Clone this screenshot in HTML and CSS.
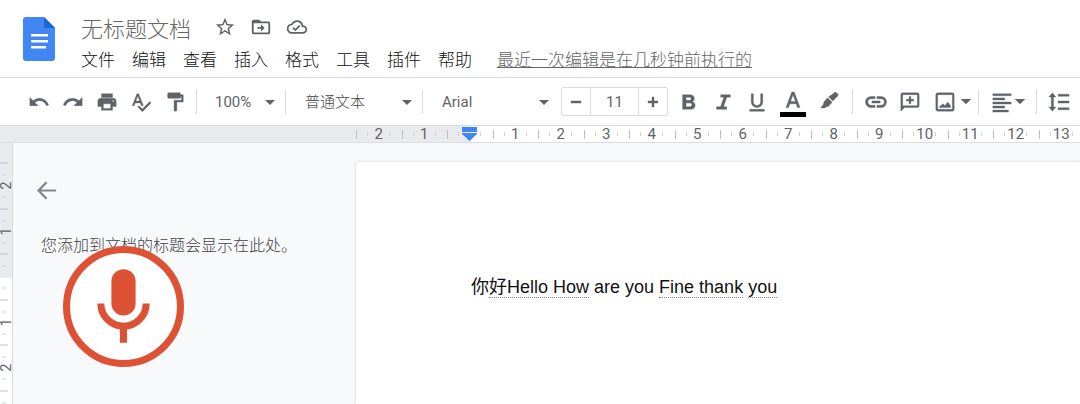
FILE: index.html
```html
<!DOCTYPE html>
<html lang="zh-CN">
<head>
  <meta charset="UTF-8">
  <meta name="viewport" content="width=device-width, initial-scale=1.0">
  <title>无标题文档</title>
  <link rel="stylesheet" href="styles.css">
</head>
<body>
  <header class="header">
    <svg class="logo" viewBox="0 0 32 44" aria-hidden="true">
      <path fill="#4285f4" d="M3 0h18l11 11v30a3 3 0 0 1-3 3H3a3 3 0 0 1-3-3V3a3 3 0 0 1 3-3z"/>
      <path fill="#1967d2" d="M21 0l11 11H21z"/>
      <path fill="#fff" d="M8 17h17v2.5H8zM8 23h17v2.5H8zM8 29h15v2.5H8z"/>
    </svg>
    <div class="header-main">
      <div class="title-row">
        <input class="doc-title" type="text" value="无标题文档" aria-label="文档标题">
        <button class="title-button" type="button" aria-label="加星标">
          <svg viewBox="0 0 24 24"><path d="M22 9.24l-7.19-.62L12 2 9.19 8.63 2 9.24l5.46 4.73L5.82 21 12 17.27 18.18 21l-1.63-7.03L22 9.24zM12 15.4l-3.76 2.27 1-4.28-3.32-2.88 4.38-.38L12 6.1l1.71 4.04 4.38.38-3.32 2.88 1 4.28L12 15.4z"/></svg>
        </button>
        <button class="title-button" type="button" aria-label="移动">
          <svg viewBox="0 0 24 24"><path d="M20 6h-8l-2-2H4c-1.1 0-2 .9-2 2v12c0 1.1.9 2 2 2h16c1.1 0 2-.9 2-2V8c0-1.1-.9-2-2-2zm0 12H4V8h16v10zm-8-1l4-4-4-4v3H8v2h4z"/></svg>
        </button>
        <button class="title-button" type="button" aria-label="查看文档状态">
          <svg viewBox="-1 -1 26 26"><path d="M19.35 10.04A7.49 7.49 0 0 0 12 4C9.11 4 6.6 5.64 5.35 8.04A5.994 5.994 0 0 0 0 14c0 3.31 2.69 6 6 6h13c2.76 0 5-2.24 5-5 0-2.64-2.05-4.78-4.65-4.96zM19 18H6c-2.21 0-4-1.79-4-4 0-2.05 1.53-3.76 3.56-3.97l1.07-.11.5-.95A5.469 5.469 0 0 1 12 6c2.62 0 4.88 1.86 5.39 4.43l.3 1.5 1.53.11A2.98 2.98 0 0 1 22 15c0 1.65-1.35 3-3 3zm-9-3.82l-2.09-2.09L6.5 13.5 10 17l6.01-6.01-1.41-1.41z"/></svg>
        </button>
      </div>
      <nav class="menu-row">
        <button class="menu" type="button">文件</button>
        <button class="menu" type="button">编辑</button>
        <button class="menu" type="button">查看</button>
        <button class="menu" type="button">插入</button>
        <button class="menu" type="button">格式</button>
        <button class="menu" type="button">工具</button>
        <button class="menu" type="button">插件</button>
        <button class="menu" type="button">帮助</button>
        <a class="last-edit" href="#">最近一次编辑是在几秒钟前执行的</a>
      </nav>
    </div>
  </header>

  <div class="toolbar" role="toolbar" aria-label="工具栏">
    <button class="tool" type="button" aria-label="撤消">
      <svg viewBox="0 0 24 24"><path d="M12.5 8c-2.65 0-5.05.99-6.9 2.6L2 7v9h9l-3.62-3.62c1.39-1.16 3.16-1.88 5.12-1.88 3.54 0 6.55 2.31 7.6 5.5l2.37-.78C21.08 11.03 17.15 8 12.5 8z"/></svg>
    </button>
    <button class="tool" type="button" aria-label="重做">
      <svg viewBox="0 0 24 24"><path d="M18.4 10.6C16.55 8.99 14.15 8 11.5 8c-4.65 0-8.58 3.03-9.96 7.22L3.9 16c1.05-3.19 4.05-5.5 7.6-5.5 1.95 0 3.73.72 5.12 1.88L13 16h9V7l-3.6 3.6z"/></svg>
    </button>
    <button class="tool" type="button" aria-label="打印">
      <svg viewBox="0 0 24 24"><path d="M19 8H5c-1.66 0-3 1.34-3 3v6h4v4h12v-4h4v-6c0-1.66-1.34-3-3-3zm-3 11H8v-5h8v5zm3-7c-.55 0-1-.45-1-1s.45-1 1-1 1 .45 1 1-.45 1-1 1zm-1-9H6v4h12V3z"/></svg>
    </button>
    <button class="tool" type="button" aria-label="拼写和语法检查">
      <svg viewBox="0 0 24 24"><path d="M12.45 16h2.09L9.43 3H7.57L2.46 16h2.09l1.12-3h5.64l1.14 3zm-6.02-5L8.5 5.48 10.57 11H6.43zm15.16.59l-8.09 8.09L9.83 16l-1.41 1.41 5.09 5.09L23 13l-1.41-1.41z"/></svg>
    </button>
    <button class="tool" type="button" aria-label="格式刷">
      <svg viewBox="0 0 24 24"><path d="M18 4V3c0-.55-.45-1-1-1H5c-.55 0-1 .45-1 1v4c0 .55.45 1 1 1h12c.55 0 1-.45 1-1V6h1v4h-8v11c0 .55.45 1 1 1h1c.55 0 1-.45 1-1v-9h7V4h-3z"/></svg>
    </button>
    <span class="separator"></span>
    <div class="picker picker-zoom">
      <select aria-label="缩放"><option>100%</option></select>
      <svg class="arrow" viewBox="0 0 10 5"><path d="M0 0h10L5 5z"/></svg>
    </div>
    <span class="separator flush"></span>
    <div class="picker">
      <select class="style-select" aria-label="样式"><option>普通文本</option></select>
      <svg class="arrow" viewBox="0 0 10 5"><path d="M0 0h10L5 5z"/></svg>
    </div>
    <span class="separator flush"></span>
    <div class="picker">
      <select aria-label="字体"><option>Arial</option></select>
      <svg class="arrow" viewBox="0 0 10 5"><path d="M0 0h10L5 5z"/></svg>
    </div>
    <div class="stepper">
      <button type="button" aria-label="减小字号"><svg viewBox="0 0 12 12"><path d="M1 5h10v2H1z"/></svg></button>
      <input type="text" value="11" aria-label="字号">
      <button type="button" aria-label="增大字号"><svg viewBox="0 0 12 12"><path d="M1 5h4V1h2v4h4v2H7v4H5V7H1z"/></svg></button>
    </div>
    <button class="tool" type="button" aria-label="粗体">
      <svg viewBox="0 0 24 24"><path d="M16 11.6c1.1-.8 1.8-2 1.8-3.3C17.8 5.3 15.7 4 13 4H5v16h8.8c2.8 0 4.900-1.900 4.900-4.500 0-1.800-1.100-3.200-2.700-3.900zM8.800 6.900h3.800c1 0 1.700.7 1.700 1.600s-.7 1.700-1.700 1.700H8.800zm4.300 10.200H8.800v-4h4.300c1.100 0 2 .9 2 2s-.9 2-2 2z"/></svg>
    </button>
    <button class="tool" type="button" aria-label="斜体">
      <svg viewBox="0 0 24 24"><path d="M9.500 4v2.800h3.500L9.300 17.200H5V20h11v-2.800h-3.500l3.700-10.400H20V4z"/></svg>
    </button>
    <button class="tool" type="button" aria-label="下划线">
      <svg viewBox="0 0 24 24"><path d="M12 18c3.600 0 6.300-2.700 6.300-6.200V3h-2.300v8.800c0 2.300-1.700 4-4 4s-4-1.700-4-4V3H5.700v8.800C5.700 15.300 8.400 18 12 18zM4 20v2.200h16V20z"/></svg>
    </button>
    <button class="tool text-color" type="button" aria-label="文字颜色">
      <svg viewBox="0 0 28 26"><path d="M12.800 1L7 16.500h2.500l1.300-3.700h6.400l1.300 3.700H21L15.200 1zm-1.200 9.500L14 3.700l2.400 6.800z"/><path fill="#000" stroke="none" d="M1 21h26v5H1z"/></svg>
    </button>
    <button class="tool" type="button" aria-label="突出显示颜色">
      <svg viewBox="0 0 24 24"><path d="M15.500 3.800l2.300-2.100c.6-.6 1.400-.6 2 0l1.700 1.700c.6.600.6 1.400 0 2l-5.400 5.500-4.600-4.600zM10.400 7.400l5 5-3.900 4.100c-.6.600-1.500.7-2.300.4L7.600 18.500H3l3.200-4.400c-.3-.8-.1-1.700.5-2.300z"/></svg>
    </button>
    <span class="separator wide"></span>
    <button class="tool" type="button" aria-label="插入链接">
      <svg viewBox="0 0 24 24"><path d="M3.100 12c0-2 1.500-3.500 3.400-3.500H11V6H6.500a6 6 0 0 0 0 12H11v-2.500H6.500C4.600 15.500 3.100 14 3.100 12zM7.500 13.200h9v-2.400h-9zM17.500 6H13v2.500h4.500a3.500 3.500 0 0 1 0 7H13V18h4.500a6 6 0 0 0 0-12z"/></svg>
    </button>
    <button class="tool" type="button" aria-label="添加评论">
      <svg viewBox="0 0 24 24"><path d="M20 2H4c-1.100 0-2 .9-2 2v18l4-4h14c1.100 0 2-.9 2-2V4c0-1.100-.9-2-2-2zm0 14H4V4h16zM11 14h2v-3h3V9h-3V6h-2v3H8v2h3z"/></svg>
    </button>
    <button class="tool image-menu" type="button" aria-label="插入图片">
      <svg viewBox="0 0 24 24"><path d="M20 2H4c-1.100 0-2 .9-2 2v16c0 1.100.9 2 2 2h16c1.100 0 2-.9 2-2V4c0-1.100-.9-2-2-2zm0 18H4V4h16zM6 18h12v-2l-3-4-3 4-2-2-4 3z"/></svg>
      <svg class="arrow" viewBox="0 0 10 5"><path d="M0 0h10L5 5z"/></svg>
    </button>
    <span class="separator flush"></span>
    <button class="tool align-menu" type="button" aria-label="对齐">
      <svg viewBox="0 0 24 24"><path d="M2 3h20v2.200H2zM2 7.500h13v2.200H2zM2 12h20v2.200H2zM2 16.400h13v2.200H2zM2 20.800h17V23H2z"/></svg>
      <svg class="arrow" viewBox="0 0 10 5"><path d="M0 0h10L5 5z"/></svg>
    </button>
    <span class="separator flush"></span>
    <button class="tool spacing" type="button" aria-label="行间距">
      <svg viewBox="0 0 24 24"><path d="M4.800 2L1 6.500h2.600v11H1L4.800 22l3.800-4.500H6v-11h2.600zM11 3.500h12v2.300H11zM11 10.900h12v2.300H11zM11 18.200h12v2.300H11z"/></svg>
    </button>
  </div>

  <div class="ruler">
    <div class="ruler-units">
      <span>2</span><span>1</span>
      <span><svg class="indent-marker" viewBox="0 0 15 14"><path d="M0 0h15v5H0zM0 6h15v1l-7.500 7L0 7z"/></svg></span>
      <span>1</span><span>2</span><span>3</span><span>4</span><span>5</span><span>6</span><span>7</span>
      <span>8</span><span>9</span><span>10</span><span>11</span><span>12</span><span>13</span>
    </div>
  </div>

  <main class="workspace">
    <div class="side-ruler">
      <div class="side-units">
        <span>2</span><span>1</span><span></span><span>1</span><span>2</span><span></span>
      </div>
    </div>
    <aside class="outline">
      <button class="back" type="button" aria-label="关闭文档大纲">
        <svg viewBox="0 0 24 24"><path d="M22 10.900H6.200l6.700-6.700L11.300 2.600 2 12l9.300 9.400 1.600-1.600-6.700-6.700H22z"/></svg>
      </button>
      <p class="outline-hint">您添加到文档的标题会显示在此处。</p>
      <button class="mic" type="button" aria-label="语音输入">
        <svg viewBox="0 0 120 120">
          <circle cx="60" cy="60" r="56.500" fill="#fff" stroke="#dd5135" stroke-width="7"/>
          <rect x="48" y="23" width="24" height="46" rx="12" fill="#dd5135"/>
          <path d="M37.500 57a22.500 22.500 0 0 0 45 0M60 79v17" fill="none" stroke="#dd5135" stroke-width="7"/>
        </svg>
      </button>
    </aside>
    <article class="page">
      <p class="page-text">你<span class="grammar">好Hello How</span> are you <span class="grammar">Fine thank</span> <span class="grammar">you</span></p>
    </article>
  </main>
</body>
</html>
```
FILE: styles.css
```css
* {
  margin: 0;
  padding: 0;
  box-sizing: border-box;
}

body {
  display: flex;
  flex-direction: column;
  height: 100vh;
  overflow: hidden;
  background: #f8f9fb;
  color: #5f6368;
  font-family: Roboto, "Noto Sans CJK SC", sans-serif;
  font-size: 15px;
}

button,
input,
select {
  border: none;
  background: none;
  color: inherit;
  font: inherit;
}

button {
  cursor: pointer;
}

svg {
  display: block;
  flex: none;
  fill: currentColor;
}

/* header */
.header {
  display: flex;
  flex: none;
  gap: 26px;
  height: 78px;
  padding: 12px 23px 0;
  background: #fff;
  border-bottom: 1px solid #dadce0;
}

.logo {
  width: 32px;
  height: 44px;
  margin-top: 5px;
}

.title-row {
  display: flex;
  align-items: center;
  height: 30px;
}

.doc-title {
  width: 126px;
  height: 30px;
  color: #666;
  font-size: 22px;
  font-weight: 300;
}

.title-button {
  display: flex;
  justify-content: center;
  width: 36px;
}

.title-button svg {
  width: 22px;
  height: 22px;
}

.menu-row {
  display: flex;
  align-items: center;
  gap: 17px;
  height: 33px;
  font-size: 17px;
  font-weight: 300;
  white-space: nowrap;
}

.menu {
  color: #111;
}

.last-edit {
  margin-left: 8px;
  color: #666;
}

/* toolbar */
.toolbar {
  display: flex;
  flex: none;
  align-items: center;
  height: 48px;
  padding-left: 22px;
  background: #fff;
  border-bottom: 1px solid #dadce0;
}

.tool {
  display: flex;
  flex: none;
  align-items: center;
  justify-content: center;
  width: 34px;
  height: 32px;
}

.tool svg {
  width: 22px;
  height: 22px;
  stroke: currentColor;
  stroke-width: 0.4;
}

.tool .arrow,
.arrow {
  width: 10px;
  height: 5px;
}

.separator {
  flex: none;
  width: 1px;
  height: 24px;
  margin: 0 4px;
  background: #dadce0;
}

.separator.flush {
  margin: 0;
}

.separator.wide {
  margin: 0 6px;
}

.picker {
  position: relative;
  flex: none;
  width: 136px;
}

.picker-zoom {
  width: 84px;
}

.picker select {
  width: 100%;
  height: 32px;
  padding-left: 19px;
  appearance: none;
}

.picker-zoom select {
  padding-left: 14px;
}

.picker .style-select {
  color: #444;
  font-weight: 300;
}

.picker .arrow {
  position: absolute;
  top: 14px;
  right: 10px;
  pointer-events: none;
}

.stepper {
  display: flex;
  flex: none;
  width: 107px;
  height: 29px;
  margin-left: 2px;
  margin-right: 4px;
  border: 1px solid #dadce0;
  border-radius: 2px;
}

.stepper button {
  display: flex;
  flex: 1;
  align-items: center;
  justify-content: center;
}

.stepper svg {
  width: 12px;
  height: 12px;
  stroke: currentColor;
  stroke-width: 0.4;
}

.stepper input {
  width: 49px;
  border: 1px solid #dadce0;
  border-width: 0 1px;
  text-align: center;
}

.text-color {
  width: 38px;
  padding-top: 4px;
}

.text-color svg {
  width: 28px;
  height: 26px;
}

.image-menu {
  gap: 5px;
  width: 51px;
}

.align-menu {
  gap: 2px;
  width: 57px;
}

.spacing {
  width: 44px;
}

/* rulers */
.ruler {
  flex: none;
  height: 17px;
  padding-left: 356px;
  overflow: hidden;
  background: linear-gradient(90deg, #e8eaed 471px, #fff 471px);
  border-bottom: 1px solid #dadce0;
}

.ruler-units {
  display: grid;
  grid-template-columns: repeat(16, 1fr);
  width: 728px;
}

.ruler-units span {
  display: flex;
  align-items: center;
  justify-content: center;
  height: 16px;
  background:
    linear-gradient(#bdc1c6, #bdc1c6) 0 50% / 1px 9px,
    linear-gradient(#cfd1d5, #cfd1d5) 25% 50% / 1px 4px,
    linear-gradient(#cfd1d5, #cfd1d5) 75% 50% / 1px 4px;
  background-repeat: no-repeat;
}

.indent-marker {
  width: 15px;
  height: 14px;
  fill: #4285f4;
}

.workspace {
  display: flex;
  flex: 1;
  min-height: 0;
}

.side-ruler {
  flex: none;
  width: 13px;
  padding-top: 20px;
  overflow: hidden;
  background: linear-gradient(#e8eaed 135px, #fff 135px);
  border-right: 1px solid #dadce0;
}

.side-units {
  display: grid;
  grid-template-rows: repeat(6, 1fr);
  height: 273px;
}

.side-units span {
  display: flex;
  align-items: center;
  justify-content: center;
  width: 12px;
  font-size: 14px;
  line-height: 12px;
  writing-mode: vertical-rl;
  transform: rotate(180deg);
  background:
    linear-gradient(#bdc1c6, #bdc1c6) 100% 100% / 8px 1px,
    linear-gradient(#cfd1d5, #cfd1d5) 75% 25% / 4px 1px,
    linear-gradient(#cfd1d5, #cfd1d5) 75% 75% / 4px 1px;
  background-repeat: no-repeat;
}

/* outline panel */
.outline {
  position: relative;
  flex: none;
  width: 343px;
  padding: 36px 22px;
}

.back {
  color: #80868b;
}

.back svg {
  width: 23px;
  height: 23px;
}

.outline-hint {
  margin-top: 28px;
  padding-left: 6px;
  color: #444;
  font-size: 16px;
  font-weight: 300;
  line-height: 24px;
}

.mic {
  position: absolute;
  top: 103px;
  left: 50px;
}

.mic svg {
  width: 121px;
  height: 121px;
}

/* document */
.page {
  flex: 1;
  margin-top: 19px;
  padding: 112px 0 0 115px;
  background: #fff;
  box-shadow: 0 0 3px rgba(60, 64, 67, 0.2);
}

.page-text {
  color: #111;
  font-family: "Liberation Sans", "Noto Sans CJK SC", sans-serif;
  font-size: 18px;
  line-height: 26px;
}

.grammar {
  border-bottom: 1px dotted #888;
}
```
